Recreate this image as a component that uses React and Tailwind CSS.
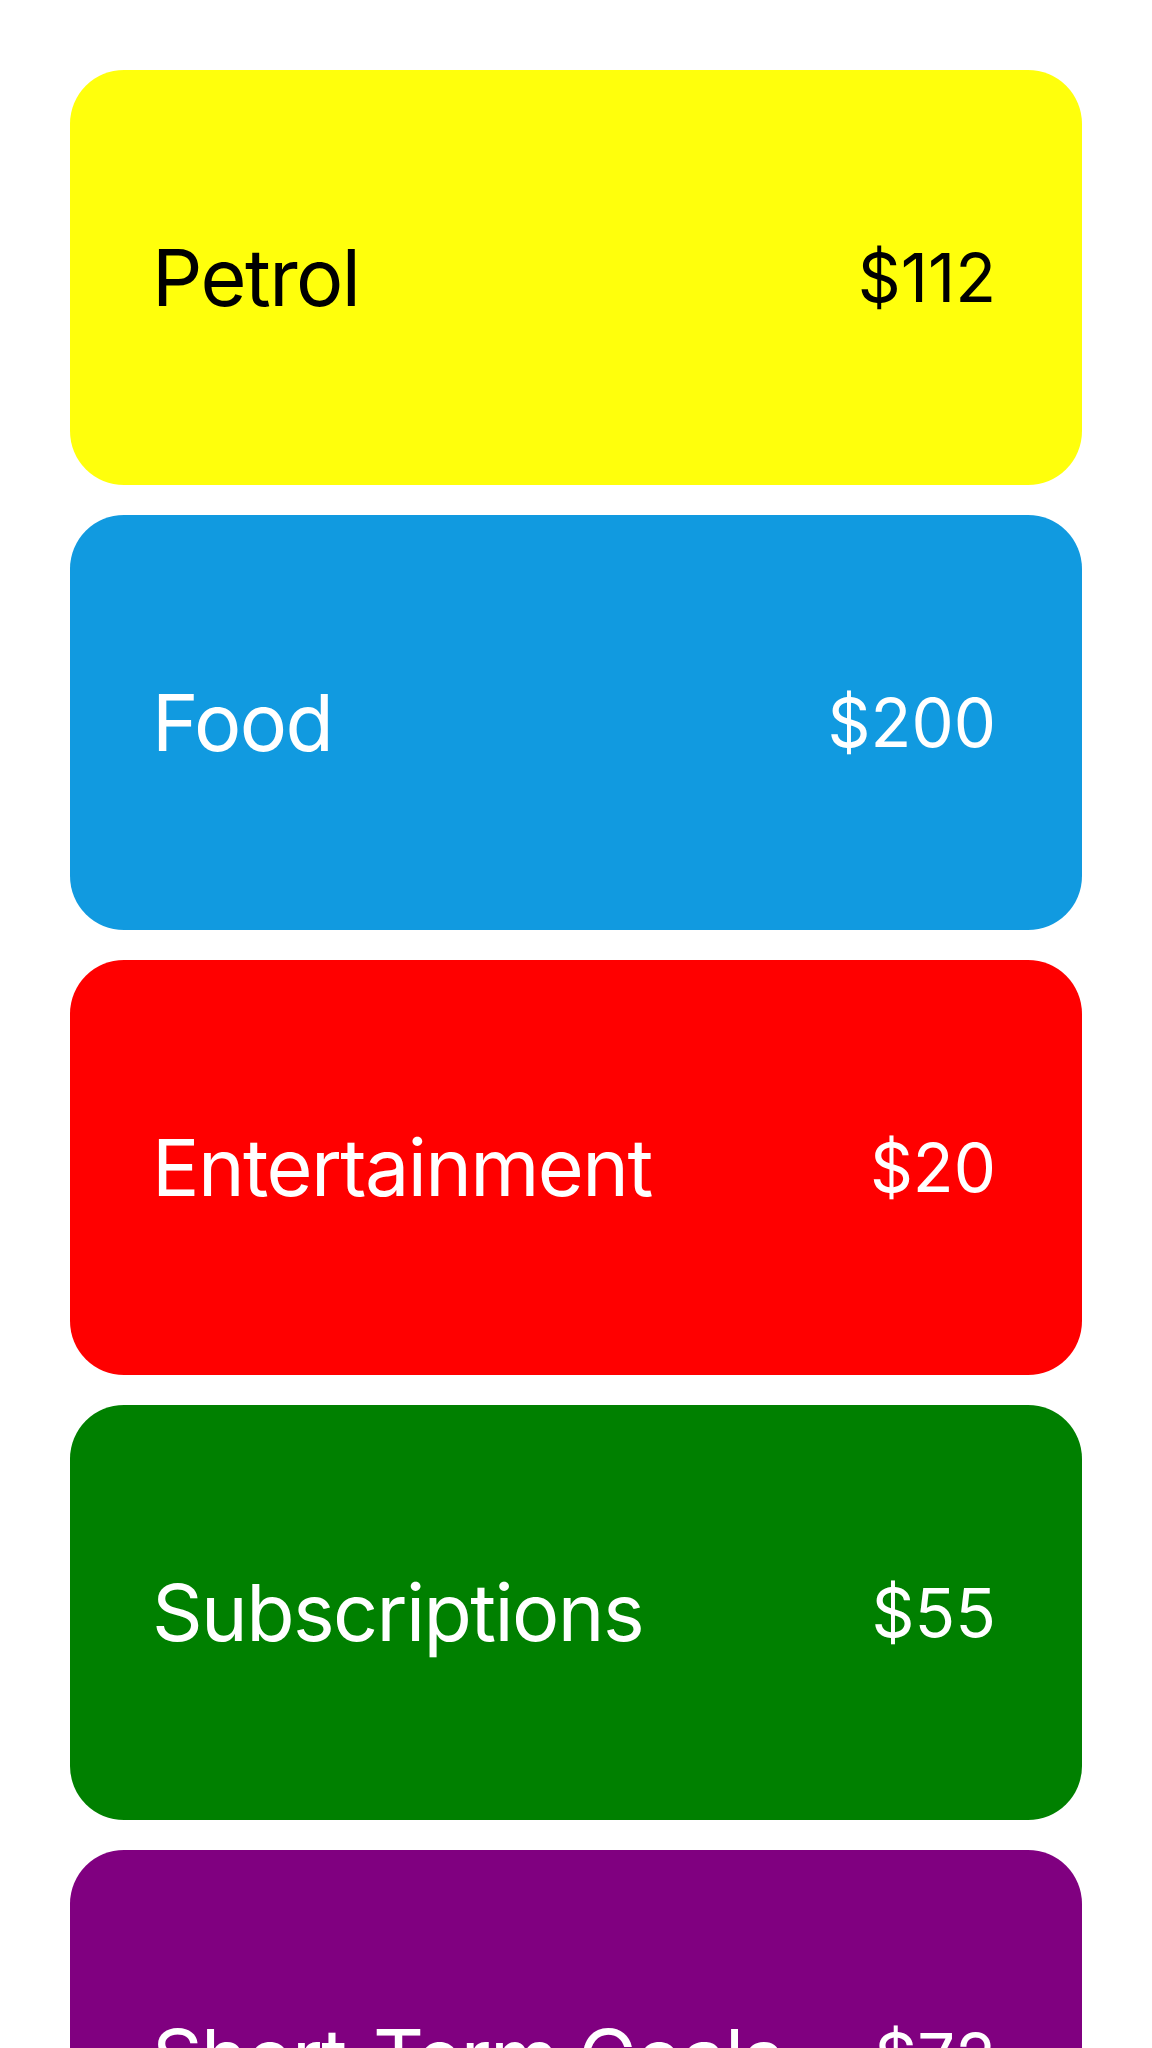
import React from 'react';

const categorias = [
  { nombre: 'Petrol', monto: '$112', fondo: 'bg-[#ffff0c]', texto: 'text-black' },
  { nombre: 'Food', monto: '$200', fondo: 'bg-[#119ae0]', texto: 'text-white' },
  { nombre: 'Entertainment', monto: '$20', fondo: 'bg-[#ff0000]', texto: 'text-white' },
  { nombre: 'Subscriptions', monto: '$55', fondo: 'bg-[#008000]', texto: 'text-white' },
  { nombre: 'Short-Term Goals', monto: '$72', fondo: 'bg-[#800080]', texto: 'text-white' },
];

const App = () => {
  return (
    <div className="min-h-screen bg-white flex flex-col gap-[30px] px-[70px] pt-[70px] pb-[70px] font-['Inter',sans-serif]">
      {categorias.map((cat) => (
        <div
          key={cat.nombre}
          className={`${cat.fondo} ${cat.texto} h-[415px] rounded-[54px] flex items-center justify-between pl-[82px] pr-[86px]`}
        >
          <span className="text-[79px] leading-none tracking-[-1.6px]">{cat.nombre}</span>
          <span className="text-[67px] leading-none">{cat.monto}</span>
        </div>
      ))}
    </div>
  );
};

export default App;
